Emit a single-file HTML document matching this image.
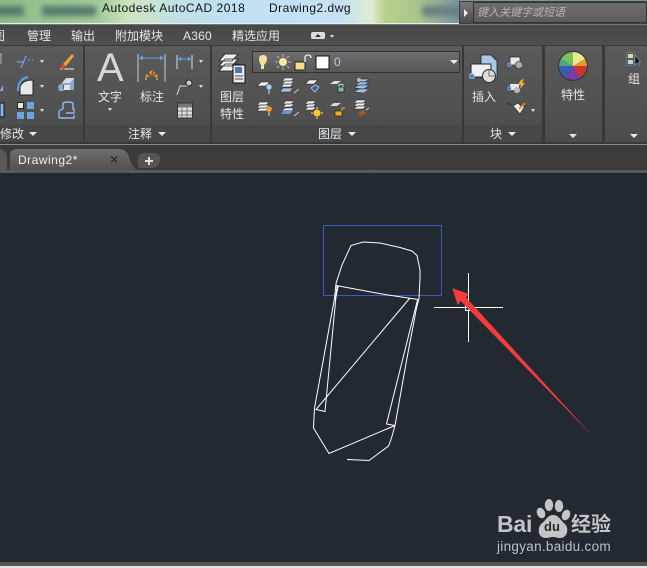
<!DOCTYPE html>
<html><head><meta charset="utf-8">
<style>
html,body{margin:0;padding:0}
body{width:647px;height:568px;overflow:hidden;position:relative;background:#222931;font-family:"Liberation Sans","Noto Sans CJK SC",sans-serif}
.a{position:absolute}
.t{position:absolute;color:#e6e6e6;font-size:12px;line-height:14px;white-space:nowrap;font-family:"Liberation Sans","WenQuanYi Zen Hei","Noto Sans CJK SC",sans-serif}
.p{position:absolute;top:46px;height:96px;background:linear-gradient(#5a5a5a,#4c4c4c);border:1px solid #383838;border-width:0 1px;box-sizing:border-box}
.pt{position:absolute;top:125px;height:17px;background:#474747}
.tri{position:absolute;width:0;height:0;border-left:4px solid transparent;border-right:4px solid transparent;border-top:4px solid #e8e8e8}
.s{position:absolute;width:0;height:0;border-left:2.5px solid transparent;border-right:2.5px solid transparent;border-top:3px solid #ddd}
svg{position:absolute;overflow:visible}
</style></head><body>
<!-- title bar -->
<div class="a" style="left:0;top:0;width:647px;height:24px;overflow:hidden;background:linear-gradient(90deg,#8fbc88 0,#a4cc9c 100px,#d0e4c0 130px,#bfe0e8 180px,#c0e0f4 230px,#c4e2f4 340px,#e0ecd0 372px,#b8d088 385px,#a8c490 420px,#7a93a0 459px,#7a93a0 647px)">
<div class="a" style="left:-6px;top:6px;width:30px;height:10px;background:#55786c;filter:blur(3px)"></div>
<div class="a" style="left:42px;top:6px;width:54px;height:10px;background:#55786c;filter:blur(3px)"></div>
<div class="a" style="left:422px;top:6px;width:40px;height:10px;background:#6b7f80;filter:blur(3px)"></div>
</div>
<div class="a" style="left:0;top:23px;width:459px;height:1px;background:#e6f0ea"></div>
<div class="t" style="left:102px;top:1px;color:#111;font-size:12px;letter-spacing:.5px">Autodesk AutoCAD 2018</div>
<div class="t" style="left:269px;top:1px;color:#111;font-size:12px;letter-spacing:.5px">Drawing2.dwg</div>
<div class="a" style="left:459px;top:1px;width:188px;height:23px;background:#3e3e3e"></div>
<div class="a" style="left:460px;top:2px;width:13px;height:21px;background:linear-gradient(#777,#4c4c4c)"></div>
<div class="a" style="left:464px;top:9px;border-left:4px solid #eee;border-top:4px solid transparent;border-bottom:4px solid transparent"></div>
<div class="a" style="left:473px;top:2px;width:174px;height:21px;background:linear-gradient(#6e6e6e,#5c5c5c);border:1px solid #333;box-sizing:border-box"></div>
<div class="t" style="left:477px;top:6px;color:#b4b4b4;font-size:11px;font-style:italic">键入关键字或短语</div>
<!-- tabs -->
<div class="a" style="left:0;top:24px;width:647px;height:1px;background:#777"></div>
<div class="a" style="left:0;top:25px;width:647px;height:21px;background:linear-gradient(#474747,#4f4f4f)"></div>
<div class="t" style="left:-7px;top:29px">图</div>
<div class="t" style="left:27px;top:29px">管理</div>
<div class="t" style="left:71px;top:29px">输出</div>
<div class="t" style="left:115px;top:29px">附加模块</div>
<div class="t" style="left:183px;top:29px;letter-spacing:.2px">A360</div>
<div class="t" style="left:232px;top:29px">精选应用</div>
<div class="a" style="left:311px;top:32px;width:14px;height:7px;background:#ddd;border-radius:2px"></div>
<div class="a" style="left:315px;top:34px;border-left:3px solid transparent;border-right:3px solid transparent;border-bottom:3px solid #333"></div>
<div class="s" style="left:330px;top:35px"></div>
<!-- ribbon -->
<div class="a" style="left:0;top:45px;width:647px;height:99px;background:#383838"></div>
<div class="p" style="left:-2px;width:86px"></div>
<div class="p" style="left:84px;width:127px"></div>
<div class="p" style="left:211px;width:252px"></div>
<div class="p" style="left:463px;width:80px"></div>
<div class="p" style="left:543px;width:61px;border-width:0 2px"></div>
<div class="p" style="left:604px;width:50px;border-width:0 1px"></div>
<div class="pt" style="left:0;width:83px"></div>
<div class="pt" style="left:86px;width:124px"></div>
<div class="pt" style="left:212px;width:250px"></div>
<div class="pt" style="left:464px;width:78px"></div>
<div class="a" style="left:0;top:144px;width:647px;height:1px;background:#8a8a8a"></div>
<!-- modify icons -->
<svg style="left:0;top:45px" width="84" height="80" viewBox="0 0 84 80">
<path d="M0 9h1v9H0" fill="none" stroke="#ddd" opacity=".7"/>
<path d="M17 17h6M26 11l-5 12M28 15h2M32 15h1" stroke="#6da9e8" stroke-width="1.2" fill="none"/>
<path d="M60 24h14" stroke="#eee"/><path d="M63 19l9-10 2 2-8 10z" fill="#e9a43d"/><circle cx="63" cy="22" r="2.500" fill="#c9521e"/>
<path d="M0 46l3-6v6z" fill="#8fb4e2"/>
<path d="M20 50V42q2-7 13-7v15z" fill="#e8e8e8" stroke="#222" stroke-width="1"/><path d="M18 46q0-12 10-14" stroke="#5d9ae0" stroke-width="2.200" fill="none"/>
<path d="M58 41l4-3 2 8h-5z" fill="#8ea9c9"/><path d="M62 38l5-5h7v12h-8z" fill="#8ea9c9"/><path d="M62 38l4-5h8l-4 5z" fill="#d4dde8"/><path d="M64 40h6v5h-6z" fill="#e4e4e4"/>
<path d="M0 58h4v14H0z" fill="#8db5e6" stroke="#111"/>
<rect x="17.500" y="57.500" width="6" height="6" fill="#e8e8e8" stroke="#222"/><rect x="27" y="57" width="7" height="7" fill="#6da3de"/><rect x="17" y="67" width="7" height="7" fill="#6da3de"/><rect x="27" y="67" width="7" height="7" fill="#6da3de"/>
<path d="M59 73v-6q0-2 4-3v-5q0-2 5-2t5 2v5h1v4h-8M59 73h15v-3" fill="none" stroke="#8fb8e8" stroke-width="1.400"/>
</svg>
<div class="s" style="left:40px;top:60px"></div><div class="s" style="left:40px;top:85px"></div><div class="s" style="left:40px;top:109px"></div>
<div class="t" style="left:0;top:127px">修改</div><div class="tri" style="left:29px;top:132px"></div>
<!-- annotate -->
<div class="t" style="left:97px;top:47px;font-size:40px;line-height:42px;color:#d8d8d8">A</div>
<div class="t" style="left:98px;top:90px">文字</div><div class="s" style="left:108px;top:108px"></div>
<svg style="left:135px;top:52px" width="33" height="32" viewBox="0 0 33 32">
<path d="M3 2v28M30 2v28" stroke="#ccc" fill="none"/><path d="M4 6h25" stroke="#5fa2ea"/><path d="M4 6l4-2.500v5zM29 6l-4-2.500v5z" fill="#5fa2ea"/>
<path d="M10 26l5-2-4-2zM23 26l-5-2 4-2zM14 20l2 4 1-4 1-3-2 2zM19 19l-2 5 3-3z" fill="#e8942b"/>
<path d="M12 27h-2M23 27h-2" stroke="#ffd36a"/>
</svg>
<div class="t" style="left:140px;top:90px">标注</div>
<svg style="left:175px;top:52px" width="30" height="68" viewBox="0 0 30 68">
<path d="M2 3v14M17 3v14" stroke="#ddd"/><path d="M3 7h13" stroke="#5fa2ea"/><path d="M3 7l3-2.500v5zM16 7l-3-2.500v5z" fill="#5fa2ea"/>
<path d="M2 43l3-9h8" fill="none" stroke="#ddd"/><circle cx="14" cy="31" r="3" fill="#ccc" stroke="#222"/>
<rect x="2.500" y="51" width="15" height="15" fill="#e0e0e0" stroke="#333"/><path d="M3 55h14M7 55v11M12 55v11M3 59h14M3 63h14" stroke="#777"/><rect x="3" y="51.500" width="14" height="3" fill="#777"/>
</svg>
<div class="s" style="left:199px;top:60px"></div><div class="s" style="left:199px;top:85px"></div>
<div class="t" style="left:128px;top:127px">注释</div><div class="tri" style="left:158px;top:132px"></div>
<!-- layers -->
<svg style="left:218px;top:52px" width="30" height="32" viewBox="0 0 30 32">
<path d="M1 9l6-7h13l-6 7zM1 14l6-7h13l-6 7zM1 19l6-7h13l-6 7z" fill="#eee" stroke="#222" stroke-width=".8"/>
<rect x="15" y="13" width="12" height="18" fill="#e8e8e8" stroke="#111"/><rect x="17" y="15" width="7" height="6" fill="#4a78b8"/><path d="M17 24h8M17 27h8" stroke="#444"/>
</svg>
<div class="t" style="left:220px;top:90px">图层</div><div class="t" style="left:220px;top:107px">特性</div>
<div class="a" style="left:252px;top:51px;width:208px;height:22px;background:linear-gradient(#6d6d6d,#585858);border:1px solid #333;box-sizing:border-box"></div>
<svg style="left:258px;top:54px" width="75" height="17" viewBox="0 0 75 17">
<path d="M3 15h3V11q3-3 3-6 0-4-4-4T1 5q0 3 2 6z" fill="#f5df9a"/>
<circle cx="25" cy="8" r="4" fill="#fbe6a8"/><path d="M25 0v3M25 13v3M17 8h3M30 8h3M19 2l2 2M29 12l2 2M19 14l2-2M29 4l2-2" stroke="#bbb"/>
<rect x="37" y="8" width="10" height="8" fill="#f6dc86" stroke="#222"/><path d="M47 8V4q0-3 3-3t3 3" fill="none" stroke="#eee" stroke-width="1.300"/>
<rect x="58" y="2" width="13" height="13" fill="#fff" stroke="#111"/>
</svg>
<div class="t" style="left:334px;top:55px;color:#a8d0f5;font-size:12px">0</div>
<div class="tri" style="left:450px;top:60px;border-top-color:#eee"></div>
<svg style="left:255px;top:77px" width="115" height="44" viewBox="0 0 115 44">
<path d="M2 9l4-4h9l-4 4z" fill="#eee" stroke="#222" stroke-width=".6"/><circle cx="14" cy="10" r="2.600" fill="#a8d0f5"/><path d="M14 13v4" stroke="#ddd"/>
<path d="M27 4l3-3h9l-3 3zM27 7l3-3h9l-3 3zM26 10l3-3h9l-3 3z" fill="#eee" stroke="#222" stroke-width=".5"/><path d="M25 15l3-4h10l-3 4z" fill="#9ec2ea" stroke="#222" stroke-width=".5"/><path d="M44 12l-5 4" stroke="#ccc"/>
<path d="M50 7l4-4h9l-4 4z" fill="#eee" stroke="#222" stroke-width=".6"/><path d="M64 10l-4 5-4-4 4-3z" fill="#3a62a6" stroke="#bcd" stroke-width=".8"/>
<path d="M75 7l4-3h7l-4 3z" fill="#ddd"/><rect x="83" y="10" width="6" height="5" fill="#7ab8a8" stroke="#111" stroke-width=".6"/><path d="M84 10V7.500h4V10" fill="none" stroke="#9dc"/>
<path d="M100 4l5-2h9l-4 3zM100 8l5-3h9l-4 3zM99 11l5-3h10l-5 4zM99 15l5-3h10l-5 4z" fill="#9ec2ea" stroke="#222" stroke-width=".5"/><circle cx="104" cy="3" r="2" fill="#bbb"/>
<path d="M2 28l3-3h9l-3 3zM2 31l3-3h9l-3 3zM2 34l3-3h9l-3 3z" fill="#eee" stroke="#222" stroke-width=".5"/><circle cx="14" cy="32" r="2.800" fill="#f0a020"/><path d="M14 35v4" stroke="#ddd"/>
<path d="M28 27l3-3h8l-3 3zM28 30l3-3h8l-3 3zM27 34l3-3h9l-3 3z" fill="#eee" stroke="#222" stroke-width=".5"/><path d="M26 37l3-4h9l-3 4z" fill="#6a94d4"/><path d="M39 39l5-4" stroke="#ccc"/>
<path d="M50 27l3-3h8l-3 3zM50 30l3-3h8l-3 3zM50 33l3-3h8l-3 3z" fill="#eee" stroke="#222" stroke-width=".5"/><circle cx="62" cy="36" r="3.500" fill="#f8c828"/><path d="M62 30v2M62 40v2M56 36h2M66 36h2" stroke="#fbe090"/>
<path d="M75 29l4-3h7l-4 3z" fill="#ddd"/><rect x="80" y="34" width="7" height="5" fill="#f0a820" stroke="#111" stroke-width=".6"/><path d="M87 34v-3h3" fill="none" stroke="#f0a820"/>
<path d="M99 26l3-3h9l-3 3zM99 29l3-3h9l-3 3zM99 32l3-3h9l-3 3z" fill="#eee" stroke="#222" stroke-width=".5"/><path d="M103 36l5-3 3 3-5 3z" fill="#a65a20"/><path d="M111 33l3-2" stroke="#ddd"/>
</svg>
<div class="t" style="left:318px;top:127px;color:#e4eef8">图层</div><div class="tri" style="left:348px;top:132px"></div>
<!-- insert -->
<svg style="left:469px;top:52px" width="30" height="32" viewBox="0 0 30 32">
<path d="M12 3h10l6 6v17H12z" fill="#a9c8ea" stroke="#222" stroke-width=".8"/><rect x="2" y="12" width="20" height="13" fill="#f0f0f0" stroke="#222"/>
<circle cx="20" cy="24" r="6.500" fill="#ddd" stroke="#333"/><path d="M20 24v-6M20 24h6" stroke="#555" stroke-width=".8"/><rect x="1" y="22" width="4" height="4" fill="#46a" stroke="#9cf"/>
</svg>
<svg style="left:507px;top:55px" width="40" height="62" viewBox="0 0 40 62">
<rect x="3" y="2" width="10" height="8" fill="#e8e8e8" stroke="#222" stroke-width=".7"/><circle cx="12" cy="10" r="3.700" fill="#aaa" stroke="#333" stroke-width=".6"/><rect x="1" y="8" width="3" height="3" fill="#46a" stroke="#9cf" stroke-width=".6"/>
<rect x="3" y="29" width="9" height="6" fill="#e8e8e8"/><circle cx="10" cy="35" r="3" fill="#bbb"/><rect x="1" y="32" width="3" height="3" fill="#46a" stroke="#9cf" stroke-width=".6"/><path d="M14 25l-3 5h3l-1 4 5-6h-3l2-4z" fill="#f2b52f"/>
<path d="M6 51l5-3 3 3 4 0-5 8z" fill="#eee" stroke="#222" stroke-width=".7"/><path d="M12 54l6-6" stroke="#e88a2a" stroke-width="1.600"/><path d="M1 48l3 2" stroke="#222"/>
</svg>
<div class="s" style="left:531px;top:109px"></div>
<div class="t" style="left:472px;top:90px">插入</div>
<div class="t" style="left:490px;top:127px">块</div><div class="tri" style="left:508px;top:132px"></div>
<!-- properties -->
<svg style="left:558px;top:51px" width="30" height="30" viewBox="0 0 30 30">
<circle cx="15" cy="15" r="15" fill="#333"/>
<path d="M15 15L15 1A14 14 0 0 0 3 8z" fill="#7cbf5e"/><path d="M15 15L15 1A14 14 0 0 1 27 8z" fill="#ecea8e"/><path d="M15 15L27 8A14 14 0 0 1 29 15z" fill="#e8962e"/><path d="M15 15L29 15A14 14 0 0 1 22 27z" fill="#c8362e"/><path d="M15 15L22 27A14 14 0 0 1 8 27z" fill="#7a3ca6"/><path d="M15 15L8 27A14 14 0 0 1 1 15z" fill="#3a5cb0"/><path d="M15 15L1 15A14 14 0 0 1 3 8z" fill="#4aa58a"/>
</svg>
<div class="t" style="left:561px;top:88px">特性</div>
<div class="tri" style="left:569px;top:134px"></div>
<!-- group -->
<svg style="left:626px;top:51px" width="16" height="16" viewBox="0 0 16 16">
<rect x=".5" y="1.500" width="8" height="13" fill="none" stroke="#5a8fd8" stroke-dasharray="1 1"/><rect x="2" y="3" width="5" height="4" fill="#e8d88a"/><rect x="2" y="9" width="5" height="4" fill="#ccc"/><path d="M9 4v10l2-2 2 3 1-1-2-3h2.500z" fill="#111" stroke="#9cf" stroke-width=".5"/>
</svg>
<div class="t" style="left:628px;top:72px">组</div>
<div class="tri" style="left:630px;top:134px"></div>
<!-- file tabs -->
<div class="a" style="left:0;top:145px;width:647px;height:27px;background:#3b3b3b"></div>
<div class="a" style="left:-12px;top:149px;width:19px;height:23px;background:#5a5a5a;border-radius:0 8px 0 0"></div>
<svg style="left:0;top:148px" width="140" height="24" viewBox="0 0 140 24">
<defs><linearGradient id="g" x1="0" y1="0" x2="0" y2="1"><stop offset="0" stop-color="#6e6e6e"/><stop offset="1" stop-color="#505050"/></linearGradient></defs>
<path d="M7 23q3-1 3-6V7q0-6 8-6h101q8 0 10 8 2 10 10 14z" fill="url(#g)"/>
</svg>
<div class="t" style="left:18px;top:153px;color:#eee;font-size:12px;letter-spacing:.5px">Drawing2*</div>
<div class="t" style="left:110px;top:152px;color:#2e2e2e;font-size:14px;font-weight:bold">×</div>
<div class="a" style="left:138px;top:153px;width:22px;height:15px;background:#555;border-radius:5px 5px 8px 3px"></div>
<div class="a" style="left:145px;top:160px;width:8px;height:2px;background:#ddd"></div>
<div class="a" style="left:148px;top:157px;width:2px;height:8px;background:#ddd"></div>
<div class="a" style="left:0;top:170px;width:647px;height:3px;background:#5a5a5a"></div>
<!-- canvas -->
<div class="a" style="left:0;top:173px;width:647px;height:389px;background:#222931"></div>
<div class="a" style="left:374px;top:173px;width:1px;height:389px;background:#262d36"></div>
<div class="a" style="left:0;top:320px;width:647px;height:1px;background:#262d36"></div>
<svg style="left:0;top:0" width="647" height="568" viewBox="0 0 647 568">
<rect x="323.500" y="225.500" width="118" height="70" fill="none" stroke="#3a5ac8" stroke-width="1"/>
<g fill="none" stroke="#fff" stroke-width="1">
<path d="M336 283.500L342 265L351 245.500L363 242L380 243L400 247.500L412 251L417 255.500L420 270V278L419 298.500L416.500 308L407 358L395 425.500L391.500 438L388.500 446L369 460.500L358 460L347 459.500"/>
<path d="M336 283.500L334.500 298.500L314.500 408L313.500 428L329 453.500L395 425.500"/>
<path d="M337 286L325 411.500L316 409.500L409.500 298.500"/>
<path d="M336 285.500L385 294.500L418 299.500"/>
<path d="M417.500 300L386.500 424L395 425.500"/>
<path d="M338 286L335 300" stroke-width="1.500"/>
</g>
<path d="M434 307.500H503M468.500 273V342" stroke="#fff" stroke-width="1"/>
<rect x="465.500" y="304.500" width="6" height="6" fill="none" stroke="#fff" stroke-width="1"/>
<path d="M452.300 288.300L469 294L466 297.500L591.700 435L460.700 301L457.700 305z" fill="#f43c3c"/>
</svg>
<!-- watermark -->
<div class="t" style="left:497px;top:511px;font-size:23px;line-height:26px;font-weight:bold;color:#c4c4c4;letter-spacing:-.2px">Bai</div>
<svg style="left:0;top:0" width="647" height="568" viewBox="0 0 647 568">
<ellipse cx="541" cy="513" rx="4" ry="5.500" fill="#c4c4c4" transform="rotate(-25 541 513)"/>
<ellipse cx="549" cy="505" rx="4.200" ry="6" fill="#c4c4c4"/>
<ellipse cx="559" cy="506" rx="4.200" ry="6" fill="#c4c4c4"/>
<ellipse cx="566" cy="515" rx="4" ry="5.500" fill="#c4c4c4" transform="rotate(25 566 515)"/>
<path d="M553 515c6 0 7 5 12 9 4 4 3 14-5 14-3 0-4-1-7-1s-4 1-7 1c-8 0-9-9-5-14 5-3 6-9 12-9z" fill="#c4c4c4"/>
</svg>
<div class="t" style="left:544px;top:520px;font-size:13px;line-height:14px;font-weight:bold;color:#222931">du</div>
<div class="t" style="left:571px;top:513px;font-size:20px;line-height:24px;font-weight:bold;color:#c4c4c4;letter-spacing:0">经验</div>
<div class="t" style="left:497px;top:539px;font-size:13.500px;line-height:15px;color:#c0c0c0;letter-spacing:.3px">jingyan.baidu.com</div>
<!-- bottom -->
<div class="a" style="left:0;top:562px;width:647px;height:4px;background:#555"></div>
<div class="a" style="left:0;top:566px;width:647px;height:2px;background:#e4e4e4"></div>
</body></html>
